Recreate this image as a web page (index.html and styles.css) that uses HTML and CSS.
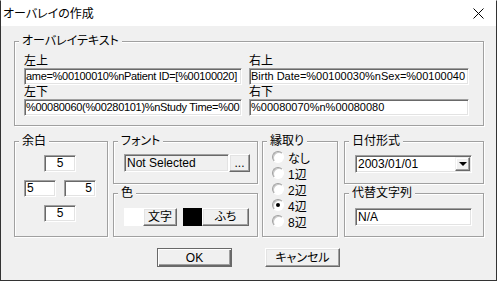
FILE: index.html
```html
<!DOCTYPE html>
<html lang="ja">
<head>
  <meta charset="UTF-8">
  <title>オーバレイの作成</title>
  <link rel="stylesheet" href="styles.css">
</head>
<body>
  <div class="window">
    <div class="titlebar">
      <span class="title">オーバレイの作成</span>
      <svg class="close" width="11" height="11" viewBox="0 0 11 11">
        <path d="M0.5 0.5L10.5 10.5M10.5 0.5L0.5 10.5" stroke="#000" stroke-width="1"/>
      </svg>
    </div>

    <div class="content">
      <fieldset class="group overlay">
        <legend>オーバレイテキスト</legend>
        <div class="overlay-grid">
          <div class="label">左上</div>
          <div class="label">右上</div>
          <div class="field long tight">ame=%00100010%nPatient ID=[%00100020]</div>
          <div class="field long">Birth Date=%00100030%nSex=%00100040</div>
          <div class="label">左下</div>
          <div class="label">右下</div>
          <div class="field long tight">%00080060(%00280101)%nStudy Time=%00</div>
          <div class="field long">%00080070%n%00080080</div>
        </div>
      </fieldset>

      <div class="lower">
        <fieldset class="group margin">
          <legend>余白</legend>
          <div class="margin-grid">
            <div class="field mfield top">5</div>
            <div class="field mfield left">5</div>
            <div class="field mfield right">5</div>
            <div class="field mfield bottom">5</div>
          </div>
        </fieldset>

        <div class="stack mid-col">
          <fieldset class="group font">
            <legend>フォント</legend>
            <div class="row">
              <div class="field readonly font-name">Not Selected</div>
              <button class="btn dots">...</button>
            </div>
          </fieldset>
          <fieldset class="group color">
            <legend>色</legend>
            <div class="row">
              <span class="swatch white"></span>
              <button class="btn btn-text">文字</button>
              <span class="swatch black"></span>
              <button class="btn btn-edge">ふち</button>
            </div>
          </fieldset>
        </div>

        <fieldset class="group edge">
          <legend>縁取り</legend>
          <div class="radios">
            <div class="radio-row"><span class="radio"></span>なし</div>
            <div class="radio-row"><span class="radio"></span>1辺</div>
            <div class="radio-row"><span class="radio"></span>2辺</div>
            <div class="radio-row"><span class="radio checked"></span>4辺</div>
            <div class="radio-row"><span class="radio"></span>8辺</div>
          </div>
        </fieldset>

        <div class="stack right-col">
          <fieldset class="group date">
            <legend>日付形式</legend>
            <div class="field combo">
              <span class="combo-value">2003/01/01</span>
              <span class="combo-btn"><span class="arrow"></span></span>
            </div>
          </fieldset>
          <fieldset class="group alt">
            <legend>代替文字列</legend>
            <div class="field alt-field">N/A</div>
          </fieldset>
        </div>
      </div>

      <div class="buttons">
        <button class="btn big default">OK</button>
        <button class="btn big">キャンセル</button>
      </div>
    </div>
  </div>
</body>
</html>
```

FILE: styles.css
```css
body {
  margin: 0;
  background: #fff;
  font-family: "Liberation Sans", "Noto Sans CJK JP", sans-serif;
  font-size: 12px;
  font-feature-settings: "palt";
  color: #000;
}
.window {
  box-sizing: border-box;
  width: 497px;
  height: 281px;
  border: 1px solid #333;
  border-top-color: #fff;
  background: #f0f0f0;
  display: flex;
  flex-direction: column;
}
.titlebar {
  height: 25px;
  background: #fff;
  display: flex;
  align-items: center;
  justify-content: space-between;
  padding: 0 12px 0 2px;
}
.title {
  line-height: 14px;
}
.content {
  padding: 8px 0 0 13px;
}

/* group boxes: horizontal insets live on the children so legends line up */
.group {
  box-sizing: border-box;
  margin: 0;
  padding: 0;
  min-width: 0;
  border: 1px solid #a0a0a0;
  box-shadow: 1px 1px 0 #fff, inset 1px 1px 0 #fff;
}
.group legend {
  margin-left: 4px;
  padding: 0 3px;
  line-height: 14px;
  background: #f0f0f0;
}

/* sunken fields */
.field {
  box-sizing: border-box;
  height: 18px;
  background: #fff;
  border: 1px solid;
  border-color: #a0a0a0 #fff #fff #a0a0a0;
  box-shadow: inset 1px 1px 0 #696969, inset -1px -1px 0 #e3e3e3;
  padding: 0 2px;
  line-height: 16px;
  white-space: nowrap;
  overflow: hidden;
}
.field.readonly {
  background: #f0f0f0;
}

/* raised buttons */
.btn {
  box-sizing: border-box;
  height: 18px;
  padding: 0;
  margin: 0;
  background: #f0f0f0;
  border: 1px solid;
  border-color: #fff #696969 #696969 #fff;
  box-shadow: inset -1px -1px 0 #a0a0a0, inset 1px 1px 0 #e3e3e3;
  font: inherit;
  line-height: 14px;
  color: #000;
}
.btn.big {
  width: 75px;
  height: 19px;
}
.btn.default {
  border-color: #696969;
  box-shadow: inset 1px 1px 0 #fff, inset -1px -1px 0 #696969, inset -2px -2px 0 #a0a0a0;
}

/* overlay text */
.overlay {
  width: 470px;
  height: 92px;
  padding-top: 6px;
}
.overlay-grid {
  display: grid;
  grid-template-columns: 218px 220px;
  grid-template-rows: 14px 17px 14px 17px;
  column-gap: 7px;
  margin-left: 9px;
}
.label {
  line-height: 14px;
}
.field.long {
  height: 17px;
  font-size: 11px;
  line-height: 15px;
  padding-left: 1px;
}
.field.tight {
  letter-spacing: -0.3px;
}

.lower {
  display: flex;
  margin-top: 8px;
}
.stack {
  display: flex;
  flex-direction: column;
  gap: 2px;
}

/* margins */
.margin {
  width: 94px;
  height: 103px;
  padding-top: 7px;
  margin-right: 5px;
}
.margin-grid {
  display: grid;
  grid-template-columns: 32px 32px;
  grid-template-rows: 17px 17px 17px;
  column-gap: 8px;
  row-gap: 8px;
  margin-left: 9px;
}
.mfield {
  width: 32px;
  height: 17px;
  line-height: 15px;
}
.mfield.top,
.mfield.bottom {
  grid-column: 1 / 3;
  justify-self: center;
  text-align: center;
}
.mfield.left {
  text-align: left;
}
.mfield.right {
  text-align: right;
  padding-right: 3px;
}

/* font / color */
.mid-col {
  width: 145px;
  margin-right: 4px;
}
.font {
  height: 50px;
  padding-top: 6px;
}
.row {
  display: flex;
  align-items: center;
  margin-left: 10px;
}
.font-name {
  width: 105px;
}
.dots {
  width: 21px;
}
.color {
  height: 51px;
  padding-top: 8px;
}
.swatch {
  width: 19px;
  height: 18px;
}
.swatch.white {
  background: #fff;
}
.swatch.black {
  background: #000;
  margin-left: 6px;
}
.btn-text {
  width: 34px;
}
.btn-edge {
  width: 47px;
}

/* edge radios */
.edge {
  width: 76px;
  height: 103px;
  padding-top: 1px;
  margin-right: 6px;
}
.radios {
  margin-left: 9px;
}
.radio-row {
  display: flex;
  align-items: center;
  gap: 4px;
  height: 16px;
}
.radio {
  box-sizing: border-box;
  position: relative;
  width: 12px;
  height: 12px;
  border-radius: 50%;
  background: #fff;
  border: 1px solid;
  border-color: #a0a0a0 #fff #fff #a0a0a0;
  box-shadow: inset 1px 1px 0 #c8c8c8;
}
.radio.checked::after {
  content: "";
  position: absolute;
  left: 3px;
  top: 3px;
  width: 4px;
  height: 4px;
  border-radius: 50%;
  background: #000;
}

/* date / alt */
.right-col {
  width: 140px;
}
.date {
  height: 50px;
  padding-top: 7px;
}
.combo {
  width: 117px;
  margin-left: 10px;
  display: flex;
  justify-content: space-between;
  align-items: center;
  padding: 0 1px 0 2px;
}
.combo-btn {
  box-sizing: border-box;
  width: 15px;
  height: 14px;
  display: flex;
  align-items: center;
  justify-content: center;
  background: #f0f0f0;
  border: 1px solid;
  border-color: #f0f0f0 #696969 #696969 #f0f0f0;
  box-shadow: inset -1px -1px 0 #a0a0a0, inset 1px 1px 0 #fff;
}
.arrow {
  width: 0;
  height: 0;
  border-left: 4px solid transparent;
  border-right: 4px solid transparent;
  border-top: 4px solid #000;
}
.alt {
  height: 51px;
  padding-top: 8px;
}
.alt-field {
  width: 117px;
  margin-left: 10px;
}

.buttons {
  display: flex;
  gap: 33px;
  margin-top: 11px;
  padding-left: 143px;
}
```
